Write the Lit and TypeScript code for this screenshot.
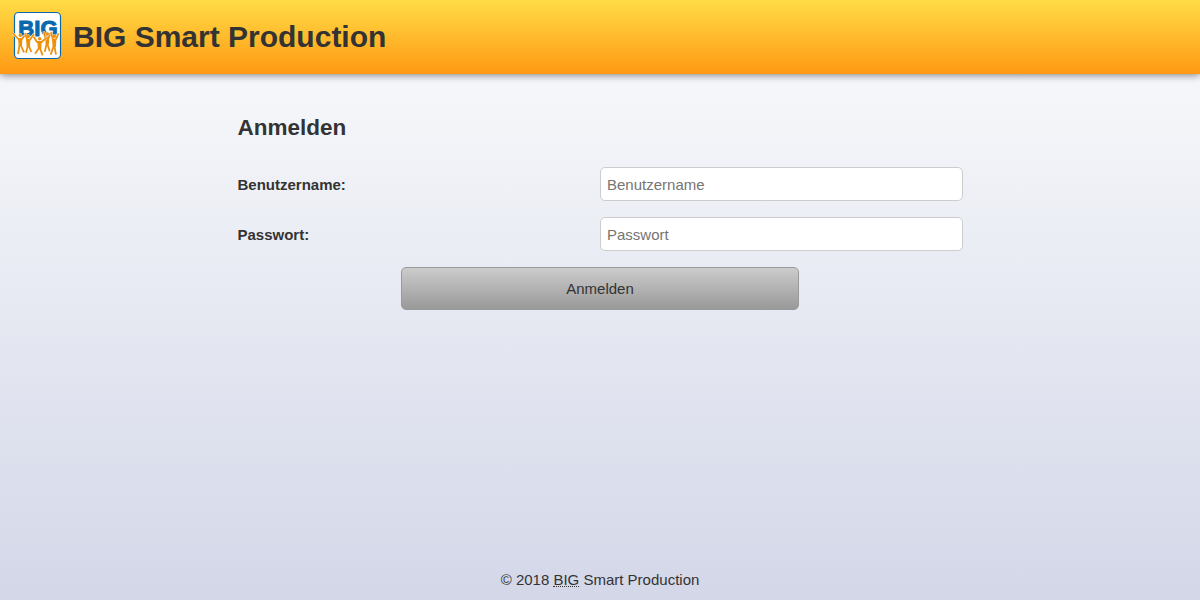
import { LitElement, html, css, svg } from "lit";
import { customElement } from "lit/decorators.js";

const people = [
  { head: [37, 88], body: "M14 81L31 99L42 99L55 82M35 116L30 144M38 117L48 139" },
  { head: [61, 91], body: "M52 82L57 101L66 101L78 84M60 118L54 140M62 118L70 138" },
  { head: [118, 84], body: "M107 76L112 95L121 95L132 78M116 113L110 137M118 113L125 136" },
  { head: [139, 91], body: "M129 79L135 101L143 101L152 82M138 118L128 146M139 119L144 146" },
  { head: [95, 98], body: "M77 92L87 108L101 108L116 95M93 126L81 143M96 127L104 148" },
];

@customElement("big-logo")
export class BigLogo extends LitElement {
  static styles = css`
    :host { display: block; width: 50px; height: 49px; }
    .logo { display: block; }
    .word { font-family: "Liberation Sans", Arial, sans-serif; font-weight: bold; font-size: 66px; }
  `;
  render() {
    return html`<svg class="logo" width="50" height="49" viewBox="12 15 150 147" aria-label="BIG">
      <rect x="19.5" y="19.5" width="138" height="138" rx="12" fill="#fff" stroke="#0869ad" stroke-width="3.5" />
      <text class="word" x="31" y="89" textLength="118" lengthAdjust="spacingAndGlyphs" fill="#0869ad" stroke="#0869ad" stroke-width="3">BIG</text>
      ${people.map((p) => {
        const torso = `M${p.head[0] - 7} ${p.head[1] + 9}h13l-1 22h-10z`;
        return svg`<g fill="none" stroke-linejoin="round">
          <path d=${p.body} stroke="#fff" stroke-width="7.5" />
          <circle cx=${p.head[0]} cy=${p.head[1]} r="6.2" fill="#fff" />
          <path d=${p.body} stroke="#ef900c" stroke-width="5.4" />
          <path d=${torso} fill="#ef900c" />
          <circle cx=${p.head[0]} cy=${p.head[1]} r="5.2" fill="#ef900c" />
        </g>`;
      })}
    </svg>`;
  }
}

@customElement("app-root")
export class AppRoot extends LitElement {
  static styles = css`
    :host {
      display: flex;
      flex-direction: column;
      height: 100vh;
      box-sizing: border-box;
      color: #333;
      font: 15px/20px "Liberation Sans", Arial, sans-serif;
      background: linear-gradient(#fbfcfd, #d3d7e8);
    }
    .header {
      display: flex;
      align-items: flex-start;
      height: 74px;
      box-sizing: border-box;
      padding: 11px 12px 0;
      gap: 11px;
      background: linear-gradient(#ffdc46, #ff9913);
      box-shadow: 0 1px 8px rgba(0, 0, 0, 0.5);
    }
    .title { margin: 0; font-size: 30px; line-height: 52px; }
    .main { flex: 1; width: 725px; margin: 0 auto; padding-top: 39px; }
    .heading { margin: 0 0 24px; font-size: 22.5px; line-height: 30px; }
    .row { display: grid; grid-template-columns: 1fr 1fr; align-items: center; margin-bottom: 16px; }
    .label { font-weight: bold; padding-top: 1px; }
    .input {
      width: 100%;
      height: 34px;
      box-sizing: border-box;
      padding: 0 6px;
      border: 1px solid #ccc;
      border-radius: 5px;
      background: #fff;
      font: inherit;
      color: #333;
    }
    .input::placeholder { color: #757575; }
    .submit {
      display: block;
      width: 398px;
      height: 43px;
      margin: 0 auto;
      padding: 0;
      border: 1px solid #999;
      border-radius: 5px;
      background: linear-gradient(#ccc, #999);
      font: inherit;
      color: #333;
    }
    .footer { padding-bottom: 10px; text-align: center; }
    .abbr { display: inline-block; height: 14px; line-height: 15px; text-decoration: none; border-bottom: 1px dotted #333; }
  `;
  render() {
    return html`
      <header class="header">
        <big-logo></big-logo>
        <h1 class="title">BIG Smart Production</h1>
      </header>
      <main class="main">
        <h2 class="heading">Anmelden</h2>
        <form>
          <div class="row">
            <label class="label" for="user">Benutzername:</label>
            <input class="input" id="user" type="text" placeholder="Benutzername" />
          </div>
          <div class="row">
            <label class="label" for="pass">Passwort:</label>
            <input class="input" id="pass" type="password" placeholder="Passwort" />
          </div>
          <button class="submit" type="button">Anmelden</button>
        </form>
      </main>
      <footer class="footer">© 2018 <abbr class="abbr">BIG</abbr> Smart Production</footer>
    `;
  }
}
